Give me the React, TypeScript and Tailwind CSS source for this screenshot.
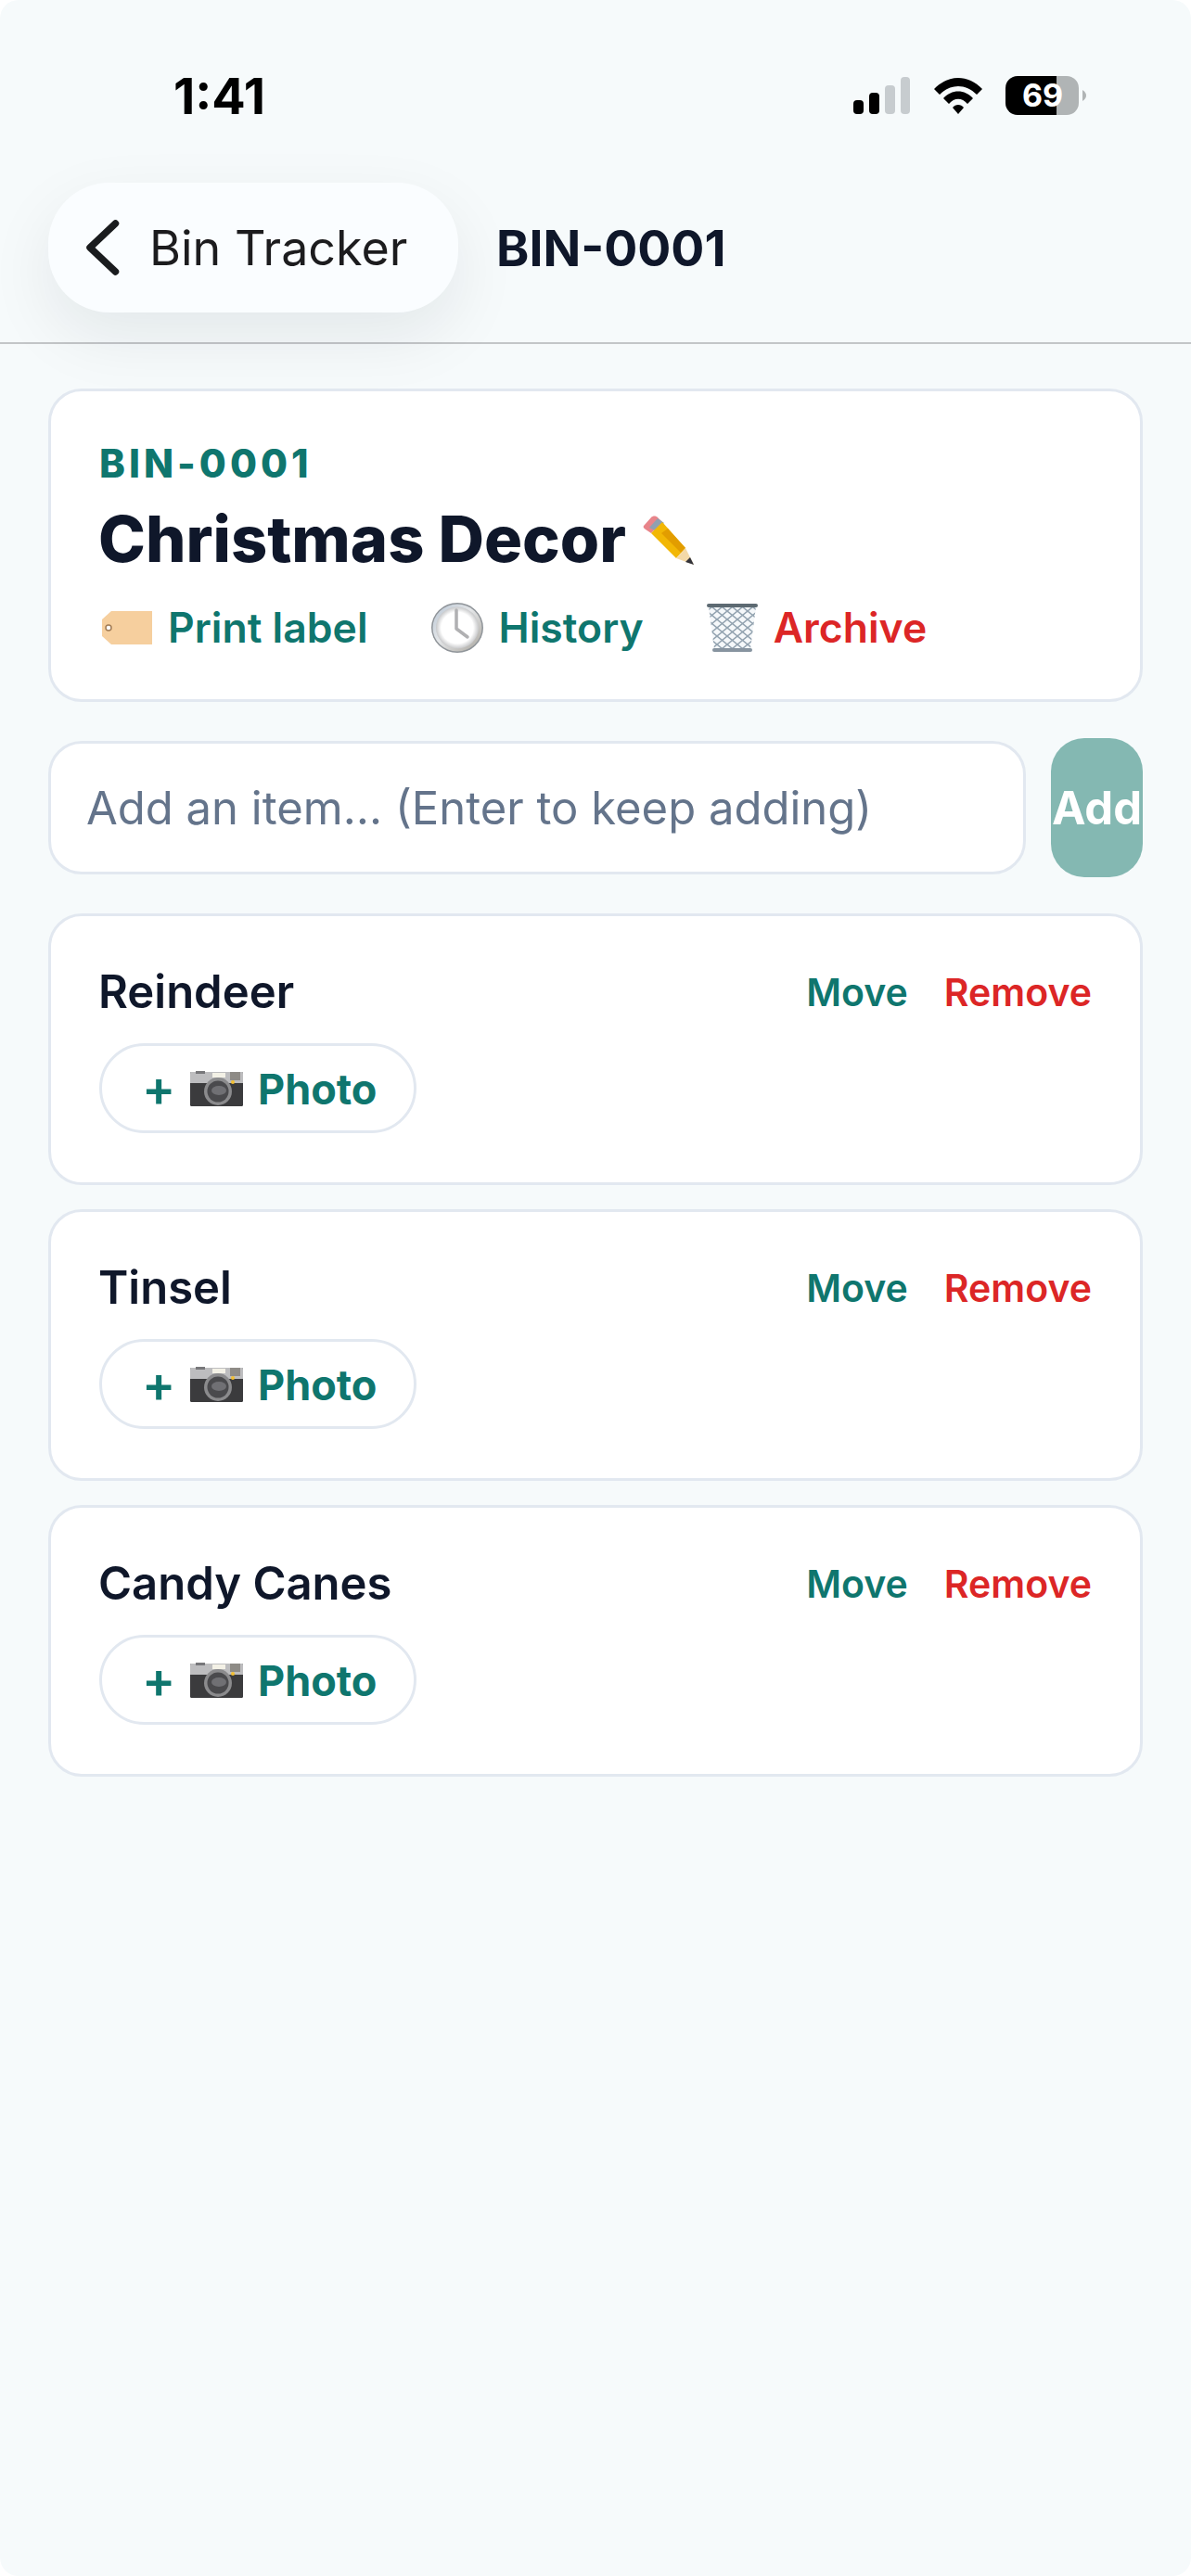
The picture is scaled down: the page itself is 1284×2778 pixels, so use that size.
import React from "react";

function Signal() {
  return (
    <svg width="62" height="41" viewBox="0 0 62 41" className="block">
      <rect x="0" y="25" width="11" height="15" rx="4" fill="#000" />
      <rect x="17" y="17" width="11" height="23" rx="4" fill="#000" />
      <rect x="34" y="9" width="11" height="31" rx="4" fill="#c7cccf" />
      <rect x="51" y="0" width="10" height="40" rx="4" fill="#c7cccf" />
    </svg>
  );
}

function Wifi() {
  return (
    <svg width="54" height="41" viewBox="0 0 54 41" className="block">
      <path d="M1 13 C16 -3 38 -3 53 13 L47 19 C35 7 19 7 7 19 Z" fill="#000" />
      <path d="M11 23 C20 13 34 13 43 23 L37 29 C31 22 23 22 17 29 Z" fill="#000" />
      <path d="M21 33 C24 29 30 29 33 33 L27 40 Z" fill="#000" />
    </svg>
  );
}

function Battery() {
  return (
    <div className="flex items-center gap-[4px]">
      <div className="flex h-[42px] w-[79px] items-center justify-center rounded-[13px] bg-[linear-gradient(90deg,#000_70%,#b0b4b5_70%)] pl-[1px] text-[34px] font-bold leading-none text-white">
        69
      </div>
      <svg width="4" height="12" viewBox="0 0 4 12" className="block">
        <path d="M0 0 C3 2 4 4 4 6 C4 8 3 10 0 12 Z" fill="#b0b4b5" />
      </svg>
    </div>
  );
}

function Chevron() {
  return (
    <svg width="36" height="60" viewBox="0 0 36 60" className="block shrink-0">
      <path d="M31.5 4 L4 30 L31.5 56" fill="none" stroke="#1a1c1e" strokeWidth="7.5" strokeLinecap="round" strokeLinejoin="round" />
    </svg>
  );
}

function Tag() {
  return (
    <svg width="54" height="36" viewBox="0 0 54 36" className="block shrink-0">
      <path d="M10 0 H54 V36 H10 L0 27 V9 Z" fill="#f6cf9e" />
      <circle cx="7" cy="18" r="3" fill="#fff" stroke="#a27c55" strokeWidth="1.5" />
    </svg>
  );
}

function Clock() {
  return (
    <svg width="56" height="54" viewBox="0 0 56 54" className="block shrink-0">
      <defs>
        <linearGradient id="rim" x1="0" y1="0" x2="1" y2="1">
          <stop offset="0" stopColor="#b9c6d4" />
          <stop offset="0.45" stopColor="#e4e6e8" />
          <stop offset="1" stopColor="#a8a49c" />
        </linearGradient>
        <radialGradient id="face" cx="0.5" cy="0.5" r="0.52">
          <stop offset="0.72" stopColor="#ffffff" />
          <stop offset="1" stopColor="#bfc0c2" />
        </radialGradient>
      </defs>
      <ellipse cx="28" cy="27" rx="28" ry="27" fill="#8f9499" />
      <ellipse cx="28" cy="27" rx="26.5" ry="25.5" fill="url(#rim)" />
      <ellipse cx="28" cy="27" rx="23" ry="22.5" fill="url(#face)" />
      <path d="M27 8 V28 L39 37" fill="none" stroke="#b0b0b2" strokeWidth="3.5" strokeLinecap="round" strokeLinejoin="round" />
    </svg>
  );
}

function Trash() {
  return (
    <svg width="55" height="54" viewBox="0 0 55 54" className="block shrink-0">
      <defs>
        <pattern id="mesh" width="11" height="9" patternUnits="userSpaceOnUse">
          <path d="M0 0 L11 9 M11 0 L0 9" stroke="#93a3b0" strokeWidth="1.5" />
        </pattern>
      </defs>
      <path d="M2 4 H53 L47 50 H8 Z" fill="#f5f8fa" />
      <path d="M2 4 H53 L47 50 H8 Z" fill="url(#mesh)" />
      <rect x="0" y="1" width="55" height="4" rx="2" fill="#5d6a72" />
      <rect x="6" y="49" width="43" height="4" rx="2" fill="#8794a0" />
    </svg>
  );
}

function Pencil() {
  return (
    <svg width="55" height="54" viewBox="0 0 55 54" className="block shrink-0">
      <path d="M1 12 L9 3 C11 1 14 1 16 3 L21 8 L9 20 L3 16 C1 15 0 13 1 12 Z" fill="#e8848a" />
      <path d="M13 17 L7 14 L16 4 L23 9 Z" fill="#8fa0b0" />
      <path d="M21 8 L46 36 L36 47 L9 20 Z" fill="#f2b705" />
      <path d="M27 15 L46 36 L41 41 L20 20 Z" fill="#e29d00" />
      <path d="M46 36 L55 54 L36 47 Z" fill="#f4d9a8" />
      <path d="M51 46 L55 54 L46 51 Z" fill="#33333a" />
    </svg>
  );
}

function Camera() {
  return (
    <svg width="57" height="38" viewBox="0 0 57 38" className="block shrink-0">
      <rect x="0" y="1" width="57" height="37" rx="1.5" fill="#3b3b3d" />
      <path d="M0 2.5 C0 1.5 1 1 2 1 H55 C56 1 57 1.5 57 2.5 V13 H0 Z" fill="#bdbdbf" />
      <rect x="6" y="0" width="10" height="3" fill="#77777a" />
      <rect x="24" y="2" width="14" height="5" fill="#f3f1e6" />
      <rect x="43" y="1" width="11" height="9" fill="#8e8b86" />
      <circle cx="46" cy="12" r="2" fill="#f3c033" />
      <circle cx="30" cy="22" r="15" fill="#8b8b8d" />
      <circle cx="30" cy="22" r="11.5" fill="#4a4a4d" />
      <ellipse cx="31" cy="21" rx="8" ry="5" fill="#707074" />
    </svg>
  );
}

function ItemCard({ name }: { name: string }) {
  return (
    <div className="h-[293px] rounded-[36px] border-[3px] border-[#e2e8f0] bg-white pl-[51px] pr-[52px] pt-[49px]">
      <div className="flex h-[64px] items-center justify-between">
        <span className="text-[49px] font-semibold leading-none text-[#0f172a]">{name}</span>
        <div className="flex items-center gap-[39px] pt-[2px] text-[41px] font-semibold leading-none">
          <span className="text-[#0f766e]">Move</span>
          <span className="text-[#dc2626]">Remove</span>
        </div>
      </div>
      <div className="ml-[1px] mt-[24px] flex h-[97px] w-[342px] items-center gap-[22px] rounded-full border-[3px] border-[#e2e8f0] pl-[43px] pt-[1px] text-[45px] font-bold leading-none text-[#0f766e]">
        <span className="w-[30px] text-center text-[54px] font-semibold">+</span>
        <Camera />
        <span className="-ml-[6px]">Photo</span>
      </div>
    </div>
  );
}

export default function App() {
  return (
    <div className="min-h-[2778px] w-[1284px] bg-white">
      <div className="min-h-[2778px] rounded-[20px] bg-[#f6fafb] font-['Inter','Liberation_Sans',sans-serif]">
        <header className="h-[371px] border-b-[2px] border-[#c3c6c8]">
          <div className="flex h-[197px] items-start justify-between pl-[187px] pr-[113px] pt-[77px]">
            <span className="text-[54px] font-bold leading-[54px] text-black">1:41</span>
            <div className="flex items-center gap-[24px] pt-[5px]">
              <Signal />
              <Wifi />
              <Battery />
            </div>
          </div>
          <div className="flex items-center gap-[41px] pl-[52px]">
            <div className="flex h-[140px] w-[442px] items-center gap-[32px] rounded-[66px] bg-[#fafdff] pl-[41px] shadow-[0_26px_70px_rgba(15,23,42,0.08)]">
              <Chevron />
              <span className="pt-[2px] text-[52px] font-normal leading-none text-[#1c1c1e]">Bin Tracker</span>
            </div>
            <span className="pt-[2px] text-[53.5px] font-bold leading-none text-[#0f172a]">BIN-0001</span>
          </div>
        </header>
        <main className="px-[52px] pt-[48px]">
          <section className="h-[338px] rounded-[36px] border-[3px] border-[#e2e8f0] bg-white pl-[51px] pt-[52px]">
            <div className="ml-[1px] text-[42px] font-extrabold leading-[52px] tracking-[4px] text-[#0f766e]">BIN-0001</div>
            <div className="mt-[14px] flex items-center gap-[18px]">
              <h1 className="text-[68.5px] font-extrabold leading-[84px] text-[#0f172a]">Christmas Decor</h1>
              <Pencil />
            </div>
            <div className="ml-[4px] mt-[26px] flex items-center text-[44.5px] font-semibold leading-none">
              <div className="flex items-center gap-[17px] text-[#0f766e]">
                <Tag />
                <span>Print label</span>
              </div>
              <div className="ml-[68px] flex items-center gap-[17px] text-[#0f766e]">
                <Clock />
                <span>History</span>
              </div>
              <div className="ml-[68px] flex items-center gap-[17px] text-[#dc2626]">
                <Trash />
                <span>Archive</span>
              </div>
            </div>
          </section>
          <div className="mt-[39px] flex items-center gap-[27px]">
            <input
              readOnly
              placeholder="Add an item… (Enter to keep adding)"
              className="h-[144px] min-w-0 flex-1 rounded-[36px] border-[3px] border-[#e2e8f0] bg-white pl-[38px] text-[49px] font-normal text-[#0f172a] outline-none placeholder:text-[#64748b]"
            />
            <button className="flex h-[150px] w-[99px] shrink-0 items-center justify-center rounded-[36px] bg-[#84b8b2] text-[49px] font-bold leading-none text-white">
              Add
            </button>
          </div>
          <div className="mt-[39px] flex flex-col gap-[26px]">
            <ItemCard name="Reindeer" />
            <ItemCard name="Tinsel" />
            <ItemCard name="Candy Canes" />
          </div>
        </main>
      </div>
    </div>
  );
}
